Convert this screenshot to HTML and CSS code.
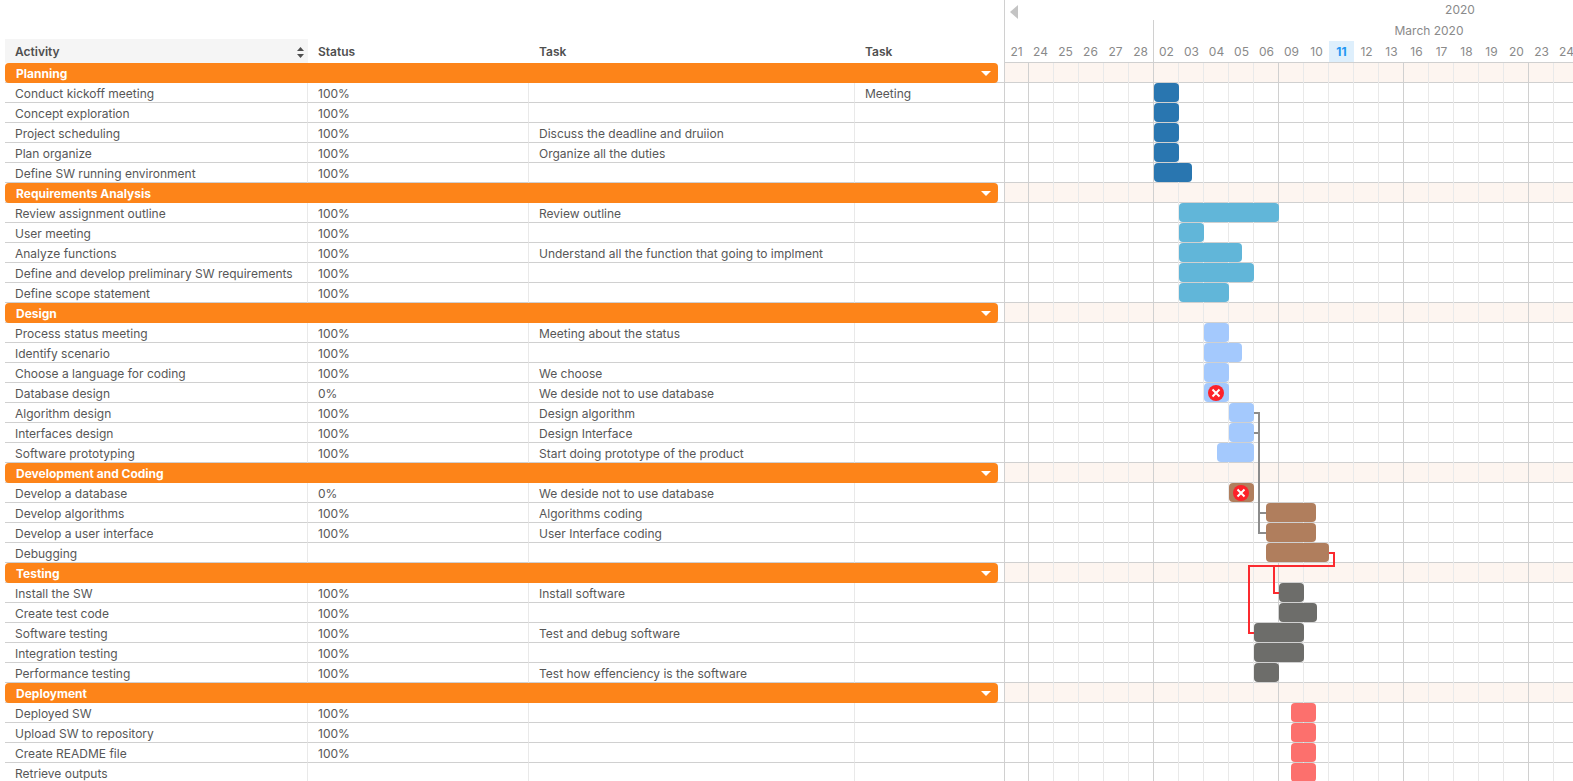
FILE: index.html
```
<!DOCTYPE html>
<html lang="en">
<head>
<meta charset="utf-8">
<title>Project schedule</title>
<link rel="stylesheet" href="styles.css">
</head>
<body>
<main class="planner">
  <section class="tasks">
    <table class="task-table">
      <colgroup><col class="col-activity"><col class="col-status"><col class="col-note"><col></colgroup>
      <thead>
        <tr>
          <th class="sorted" scope="col"><button class="sort" type="button">Activity<svg width="7" height="11" viewBox="0 0 7 11" aria-hidden="true"><path d="M3.5 0 7 4H0zM3.5 11 0 7h7z"/></svg></button></th>
          <th scope="col">Status</th><th scope="col">Task</th><th scope="col">Task</th>
        </tr>
      </thead>
      <tbody>
        <tr><th class="group" colspan="4"><button class="group-bar" type="button">Planning<svg class="caret" width="10" height="5" viewBox="0 0 10 5" aria-hidden="true"><path d="M0 0h10L5 5z"/></svg></button></th></tr>
        <tr><td>Conduct kickoff meeting</td><td>100%</td><td></td><td>Meeting</td></tr>
        <tr><td>Concept exploration</td><td>100%</td><td></td><td></td></tr>
        <tr><td>Project scheduling</td><td>100%</td><td>Discuss the deadline and druiion</td><td></td></tr>
        <tr><td>Plan organize</td><td>100%</td><td>Organize all the duties</td><td></td></tr>
        <tr><td>Define SW running environment</td><td>100%</td><td></td><td></td></tr>
      </tbody>
      <tbody>
        <tr><th class="group" colspan="4"><button class="group-bar" type="button">Requirements Analysis<svg class="caret" width="10" height="5" viewBox="0 0 10 5" aria-hidden="true"><path d="M0 0h10L5 5z"/></svg></button></th></tr>
        <tr><td>Review assignment outline</td><td>100%</td><td>Review outline</td><td></td></tr>
        <tr><td>User meeting</td><td>100%</td><td></td><td></td></tr>
        <tr><td>Analyze functions</td><td>100%</td><td>Understand all the function that going to implment</td><td></td></tr>
        <tr><td>Define and develop preliminary SW requirements</td><td>100%</td><td></td><td></td></tr>
        <tr><td>Define scope statement</td><td>100%</td><td></td><td></td></tr>
      </tbody>
      <tbody>
        <tr><th class="group" colspan="4"><button class="group-bar" type="button">Design<svg class="caret" width="10" height="5" viewBox="0 0 10 5" aria-hidden="true"><path d="M0 0h10L5 5z"/></svg></button></th></tr>
        <tr><td>Process status meeting</td><td>100%</td><td>Meeting about the status</td><td></td></tr>
        <tr><td>Identify scenario</td><td>100%</td><td></td><td></td></tr>
        <tr><td>Choose a language for coding</td><td>100%</td><td>We choose</td><td></td></tr>
        <tr><td>Database design</td><td>0%</td><td>We deside not to use database</td><td></td></tr>
        <tr><td>Algorithm design</td><td>100%</td><td>Design algorithm</td><td></td></tr>
        <tr><td>Interfaces design</td><td>100%</td><td>Design Interface</td><td></td></tr>
        <tr><td>Software prototyping</td><td>100%</td><td>Start doing prototype of the product</td><td></td></tr>
      </tbody>
      <tbody>
        <tr><th class="group" colspan="4"><button class="group-bar" type="button">Development and Coding<svg class="caret" width="10" height="5" viewBox="0 0 10 5" aria-hidden="true"><path d="M0 0h10L5 5z"/></svg></button></th></tr>
        <tr><td>Develop a database</td><td>0%</td><td>We deside not to use database</td><td></td></tr>
        <tr><td>Develop algorithms</td><td>100%</td><td>Algorithms coding</td><td></td></tr>
        <tr><td>Develop a user interface</td><td>100%</td><td>User Interface coding</td><td></td></tr>
        <tr><td>Debugging</td><td></td><td></td><td></td></tr>
      </tbody>
      <tbody>
        <tr><th class="group" colspan="4"><button class="group-bar" type="button">Testing<svg class="caret" width="10" height="5" viewBox="0 0 10 5" aria-hidden="true"><path d="M0 0h10L5 5z"/></svg></button></th></tr>
        <tr><td>Install the SW</td><td>100%</td><td>Install software</td><td></td></tr>
        <tr><td>Create test code</td><td>100%</td><td></td><td></td></tr>
        <tr><td>Software testing</td><td>100%</td><td>Test and debug software</td><td></td></tr>
        <tr><td>Integration testing</td><td>100%</td><td></td><td></td></tr>
        <tr><td>Performance testing</td><td>100%</td><td>Test how effenciency is the software</td><td></td></tr>
      </tbody>
      <tbody>
        <tr><th class="group" colspan="4"><button class="group-bar" type="button">Deployment<svg class="caret" width="10" height="5" viewBox="0 0 10 5" aria-hidden="true"><path d="M0 0h10L5 5z"/></svg></button></th></tr>
        <tr><td>Deployed SW</td><td>100%</td><td></td><td></td></tr>
        <tr><td>Upload SW to repository</td><td>100%</td><td></td><td></td></tr>
        <tr><td>Create README file</td><td>100%</td><td></td><td></td></tr>
        <tr><td>Retrieve outputs</td><td></td><td></td><td></td></tr>
      </tbody>
    </table>
  </section>

  <section class="timeline" aria-label="Timeline">
    <header class="scale">
      <div class="year"><button class="earlier" type="button" aria-label="Earlier dates"><svg width="8" height="14" viewBox="0 0 8 14" aria-hidden="true"><path d="M8 0v14L0 7z"/></svg></button><span class="year-name">2020</span></div>
      <div class="periods">
        <div class="period february">
          <div class="days"><span class="first">21</span><span>24</span><span>25</span><span>26</span><span>27</span><span>28</span></div>
        </div>
        <div class="period march">
          <div class="month">March 2020</div>
          <div class="days"><span>02</span><span>03</span><span>04</span><span>05</span><span>06</span><span>09</span><span>10</span><span class="today">11</span><span>12</span><span>13</span><span>16</span><span>17</span><span>18</span><span>19</span><span>20</span><span>23</span><span>24</span></div>
        </div>
      </div>
    </header>
    <div class="chart">
      <div class="lane summary"></div>
      <div class="lane"><div class="bar planning" style="margin-left:149px;width:25px"></div></div>
      <div class="lane"><div class="bar planning" style="margin-left:149px;width:25px"></div></div>
      <div class="lane"><div class="bar planning" style="margin-left:149px;width:25px"></div></div>
      <div class="lane"><div class="bar planning" style="margin-left:149px;width:25px"></div></div>
      <div class="lane"><div class="bar planning" style="margin-left:149px;width:38px"></div></div>
      <div class="lane summary"></div>
      <div class="lane"><div class="bar analysis" style="margin-left:174px;width:100px"></div></div>
      <div class="lane"><div class="bar analysis" style="margin-left:174px;width:25px"></div></div>
      <div class="lane"><div class="bar analysis" style="margin-left:174px;width:63px"></div></div>
      <div class="lane"><div class="bar analysis" style="margin-left:174px;width:75px"></div></div>
      <div class="lane"><div class="bar analysis" style="margin-left:174px;width:50px"></div></div>
      <div class="lane summary"></div>
      <div class="lane"><div class="bar design" style="margin-left:199px;width:25px"></div></div>
      <div class="lane"><div class="bar design" style="margin-left:199px;width:38px"></div></div>
      <div class="lane"><div class="bar design" style="margin-left:199px;width:25px"></div></div>
      <div class="lane"><div class="bar design" style="margin-left:199px;width:25px"><svg class="cancelled" width="16" height="16" viewBox="0 0 16 16" role="img" aria-label="Cancelled"><circle cx="8" cy="8" r="8"/><path d="m4.5 4.5 7 7M11.500 4.500l-7 7"/></svg></div></div>
      <div class="lane"><div class="bar design" style="margin-left:224px;width:25px"></div></div>
      <div class="lane"><div class="bar design" style="margin-left:224px;width:25px"></div></div>
      <div class="lane"><div class="bar design" style="margin-left:212px;width:37px"></div></div>
      <div class="lane summary"></div>
      <div class="lane"><div class="bar coding" style="margin-left:224px;width:25px"><svg class="cancelled" width="16" height="16" viewBox="0 0 16 16" role="img" aria-label="Cancelled"><circle cx="8" cy="8" r="8"/><path d="m4.5 4.5 7 7M11.500 4.500l-7 7"/></svg></div></div>
      <div class="lane"><div class="bar coding" style="margin-left:261px;width:50px"></div></div>
      <div class="lane"><div class="bar coding" style="margin-left:261px;width:50px"></div></div>
      <div class="lane"><div class="bar coding" style="margin-left:261px;width:63px"></div></div>
      <div class="lane summary"></div>
      <div class="lane"><div class="bar testing" style="margin-left:274px;width:25px"></div></div>
      <div class="lane"><div class="bar testing" style="margin-left:274px;width:38px"></div></div>
      <div class="lane"><div class="bar testing" style="margin-left:249px;width:50px"></div></div>
      <div class="lane"><div class="bar testing" style="margin-left:249px;width:50px"></div></div>
      <div class="lane"><div class="bar testing" style="margin-left:249px;width:25px"></div></div>
      <div class="lane summary"></div>
      <div class="lane"><div class="bar deployment" style="margin-left:286px;width:25px"></div></div>
      <div class="lane"><div class="bar deployment" style="margin-left:286px;width:25px"></div></div>
      <div class="lane"><div class="bar deployment" style="margin-left:286px;width:25px"></div></div>
      <div class="lane"><div class="bar deployment" style="margin-left:286px;width:25px"></div></div>
      <svg class="links" width="400" height="720" viewBox="0 0 400 720" aria-hidden="true">
        <path class="link" d="M249 350H254V470H261M249 370H254M254 450H261"/>
        <path class="link late" d="M324 490H329V503H244V570H249M269 503V530H274"/>
      </svg>
    </div>
  </section>
</main>
</body>
</html>
```
FILE: styles.css
```
* { box-sizing: border-box; }

body {
  margin: 0;
  height: 100vh;
  overflow: hidden;
  background: #fff;
  color: #4f4f4f;
  font: 12px/20px Inter, "Liberation Sans", sans-serif;
}

button {
  padding: 0;
  border: 0;
  background: none;
  color: inherit;
  font: inherit;
  cursor: pointer;
}

.planner {
  display: grid;
  grid-template-columns: 1005px minmax(0, 1fr);
  height: 100%;
  overflow: hidden;
}

/* Task table */
.tasks {
  padding: 39px 0 0 5px;
  border-right: 1px solid #d0d0d0;
}

.task-table {
  width: 100%;
  table-layout: fixed;
  border-collapse: separate;
  border-spacing: 0;
}

.col-activity { width: 303px; }
.col-status { width: 221px; }
.col-note { width: 326px; }

.task-table th,
.task-table td {
  height: 20px;
  padding: 0 10px;
  text-align: left;
  white-space: nowrap;
}

.task-table td {
  padding-top: 2px;
  border-right: 1px solid #e9e9e9;
  border-bottom: 1px solid #d0d0d0;
  color: #575757;
  line-height: 17px;
}

.task-table td:last-child { border-right: 0; }

.task-table thead th {
  height: 24px;
  padding-top: 2px;
  font-weight: 600;
}

.task-table .sorted {
  padding-right: 4px;
  background: #f5f5f5;
}

.sort {
  display: flex;
  align-items: center;
  justify-content: space-between;
  width: 100%;
}

.sort svg { fill: #4f4f4f; }

.task-table .group {
  padding: 0 6px 0 0;
  background: linear-gradient(#d0d0d0, #d0d0d0) bottom / 100% 1px no-repeat;
}

.group-bar {
  display: flex;
  align-items: center;
  justify-content: space-between;
  width: 100%;
  height: 20px;
  padding: 2px 7px 0 11px;
  border-radius: 4px;
  background: #fd8419;
  color: #fff;
  font-weight: 700;
  line-height: 18px;
}

.caret {
  margin-bottom: 2px;
  fill: #fff;
}

/* Time scale */
.timeline {
  min-width: 0;
  overflow: hidden;
}

.scale {
  height: 63px;
  border-bottom: 1px solid #d0d0d0;
  color: #8a8a8a;
}

.year {
  display: flex;
  height: 20px;
  padding-left: 5px;
}

.earlier {
  display: flex;
  align-items: center;
  padding-top: 3px;
}

.earlier svg { fill: #c4c4c4; }

.year-name {
  flex: 0 0 884px;
  text-align: center;
}

.periods { display: flex; }

.period {
  display: flex;
  flex: none;
  flex-direction: column;
  justify-content: flex-end;
  height: 42px;
}

.february { border-right: 1px solid #d0d0d0; }

.march { width: 550px; }

.month {
  height: 21px;
  line-height: 21px;
  text-align: center;
}

.days {
  display: flex;
  height: 21px;
  line-height: 22px;
}

.days span {
  flex: none;
  width: 25px;
  text-align: center;
}

.days .first { width: 23px; }

.days .today {
  background: #deeffc;
  color: #2196f3;
  font-weight: 700;
}

/* Chart */
.chart { position: relative; }

.lane {
  height: 20px;
  background:
    linear-gradient(90deg, transparent 124px, #d0d0d0 124px) -101px 0 / 125px 100%,
    linear-gradient(90deg, transparent 24px, #e9e9e9 24px) -1px 0 / 25px 100%,
    linear-gradient(#d0d0d0, #d0d0d0) bottom / 100% 1px no-repeat;
}

.summary { background-color: #fdf5f0; }

.bar {
  display: flex;
  align-items: center;
  height: 19px;
  border-radius: 4px;
}

.planning { background: #2976b0; }
.analysis { background: #61b6d9; }
.design { background: #a4c9fd; }
.coding { background: #b07e5d; }
.testing { background: #6d6d6a; }
.deployment { background: #fc706d; }

.cancelled { margin-left: 4px; }

.cancelled circle { fill: #fd2129; }

.cancelled path {
  stroke: #fff;
  stroke-width: 2;
}

.links {
  position: absolute;
  top: 0;
  left: 0;
  pointer-events: none;
}

.link {
  fill: none;
  stroke: #8c8c8c;
  stroke-width: 2;
}

.late { stroke: #fb2a2f; }
```
